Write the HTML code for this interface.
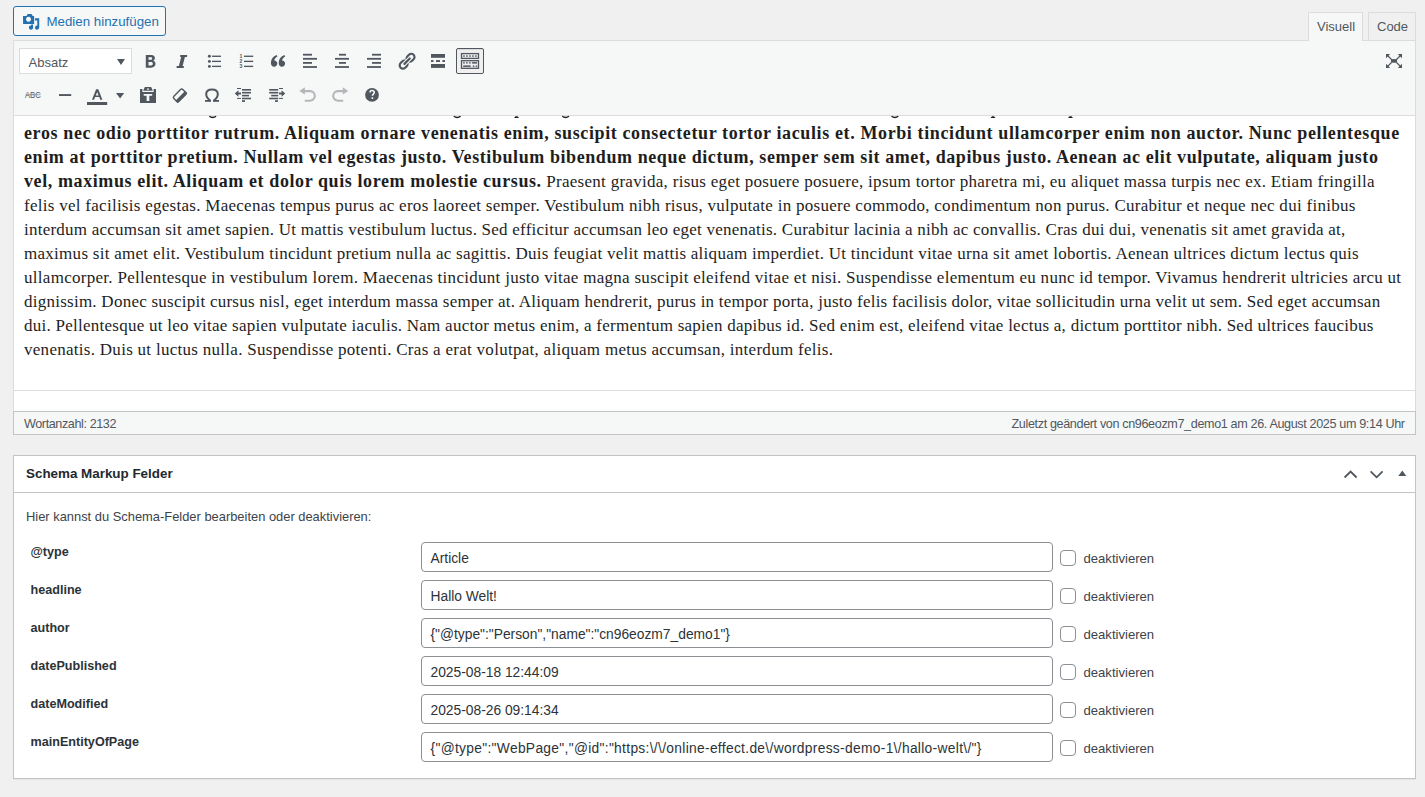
<!DOCTYPE html>
<html lang="de">
<head>
<meta charset="utf-8">
<title>Beitrag bearbeiten</title>
<style>
html,body{margin:0;padding:0;}
body{width:1425px;height:797px;background:#f0f0f1;position:relative;overflow:hidden;font-family:"Liberation Sans",sans-serif;color:#3c434a;}
.abs{position:absolute;}
.t{position:absolute;white-space:nowrap;line-height:1;}
/* media button */
#media{left:13px;top:6px;width:151px;height:28px;border:1px solid #2271b1;border-radius:3px;background:#f6f7f7;}
/* tabs */
.tab{position:absolute;top:12px;height:28px;border:1px solid #dcdcde;border-bottom:0;box-sizing:border-box;}
#tabv{left:1308px;width:55px;height:29px;background:#f6f7f7;z-index:3;}
#tabc{left:1368px;width:48px;background:#f0f0f1;}
/* editor */
#ed{left:13px;top:40px;width:1401px;height:393px;border:1px solid #dcdcde;background:#fff;}
#tb{left:14px;top:41px;width:1401px;height:74px;background:#f6f7f7;border-bottom:1px solid #dcdcde;}
#sel{left:19px;top:48px;width:111px;height:24px;border:1px solid #dcdcde;background:#fff;}
#ks{left:456px;top:48px;width:26px;height:24px;border:1px solid #50575e;border-radius:2px;background:#f0f0f1;box-shadow:inset 0 2px 1px -1px rgba(0,0,0,.1);}
#content{left:14px;top:116px;width:1401px;height:274px;overflow:hidden;background:#fff;}
#hr1{left:14px;top:390px;width:1401px;height:1px;background:#dcdcde;}
#status{left:13px;top:411px;width:1401px;height:22px;border:1px solid #c3c4c7;background:#f6f7f7;}
.ln{position:absolute;left:10px;height:24px;line-height:24px;white-space:nowrap;color:#1e1e1e;}
.ln .b{font-family:"Liberation Serif",serif;font-weight:bold;font-size:18px;}
.ln .r{font-family:"Liberation Serif",serif;font-size:17px;}
/* schema box */
#box{left:13px;top:455px;width:1401px;height:322px;border:1px solid #c3c4c7;background:#fff;box-shadow:0 1px 1px rgba(0,0,0,.04);}
#boxh{left:14px;top:492px;width:1401px;height:1px;background:#c3c4c7;}
.inp{position:absolute;left:421px;width:630px;height:28px;border:1px solid #8c8f94;border-radius:4px;background:#fff;}
.cb{position:absolute;left:1060px;width:14px;height:14px;border:1px solid #8c8f94;border-radius:4px;background:#fff;}
.lbl{font-weight:bold;color:#2c3338;}
</style>
</head>
<body>
<div id="media" class="abs"></div>
<div class="t" style="left:46.5px;top:15px;font-size:13.3px;color:#2271b1;">Medien hinzufügen</div>

<div id="tabc" class="tab"></div>
<div id="ed" class="abs"></div>
<div id="tb" class="abs"></div>
<div id="tabv" class="tab"></div>
<div class="t" style="left:1317px;top:20px;font-size:13px;color:#50575e;z-index:4">Visuell</div>
<div class="t" style="left:1377px;top:20px;font-size:13px;color:#50575e;">Code</div>

<div id="sel" class="abs"></div>
<div class="t" style="left:28.5px;top:56px;font-size:13px;color:#50575e;">Absatz</div>
<div id="ks" class="abs"></div>

<div id="content" class="abs">
<div class="ln" style="top:5px"><span class="b" style="letter-spacing:0.618px">eros nec odio porttitor rutrum. Aliquam ornare venenatis enim, suscipit consectetur tortor iaculis et. Morbi tincidunt ullamcorper enim non auctor. Nunc pellentesque</span></div>
<div class="ln" style="top:29px"><span class="b" style="letter-spacing:0.580px">enim at porttitor pretium. Nullam vel egestas justo. Vestibulum bibendum neque dictum, semper sem sit amet, dapibus justo. Aenean ac elit vulputate, aliquam justo</span></div>
<div class="ln" style="top:53px"><span class="b" style="letter-spacing:0.593px">vel, maximus elit. Aliquam et dolor quis lorem molestie cursus.</span><span class="r" style="letter-spacing:0.286px"> Praesent gravida, risus eget posuere posuere, ipsum tortor pharetra mi, eu aliquet massa turpis nec ex. Etiam fringilla</span></div>
<div class="ln" style="top:78px"><span class="r" style="letter-spacing:0.276px">felis vel facilisis egestas. Maecenas tempus purus ac eros laoreet semper. Vestibulum nibh risus, vulputate in posuere commodo, condimentum non purus. Curabitur et neque nec dui finibus</span></div>
<div class="ln" style="top:102px"><span class="r" style="letter-spacing:0.238px">interdum accumsan sit amet sapien. Ut mattis vestibulum luctus. Sed efficitur accumsan leo eget venenatis. Curabitur lacinia a nibh ac convallis. Cras dui dui, venenatis sit amet gravida at,</span></div>
<div class="ln" style="top:126px"><span class="r" style="letter-spacing:0.277px">maximus sit amet elit. Vestibulum tincidunt pretium nulla ac sagittis. Duis feugiat velit mattis aliquam imperdiet. Ut tincidunt vitae urna sit amet lobortis. Aenean ultrices dictum lectus quis</span></div>
<div class="ln" style="top:150px"><span class="r" style="letter-spacing:0.287px">ullamcorper. Pellentesque in vestibulum lorem. Maecenas tincidunt justo vitae magna suscipit eleifend vitae et nisi. Suspendisse elementum eu nunc id tempor. Vivamus hendrerit ultricies arcu ut</span></div>
<div class="ln" style="top:174px"><span class="r" style="letter-spacing:0.249px">dignissim. Donec suscipit cursus nisl, eget interdum massa semper at. Aliquam hendrerit, purus in tempor porta, justo felis facilisis dolor, vitae sollicitudin urna velit ut sem. Sed eget accumsan</span></div>
<div class="ln" style="top:198px"><span class="r" style="letter-spacing:0.255px">dui. Pellentesque ut leo vitae sapien vulputate iaculis. Nam auctor metus enim, a fermentum sapien dapibus id. Sed enim est, eleifend vitae lectus a, dictum porttitor nibh. Sed ultrices faucibus</span></div>
<div class="ln" style="top:222px"><span class="r" style="letter-spacing:0.283px">venenatis. Duis ut luctus nulla. Suspendisse potenti. Cras a erat volutpat, aliquam metus accumsan, interdum felis.</span></div>
</div>
<div id="hr1" class="abs"></div>
<div id="status" class="abs"></div>
<div class="t" style="left:24px;top:417.5px;font-size:12.6px;letter-spacing:-0.4px;color:#50575e;">Wortanzahl: 2132</div>
<div class="t" style="left:1011.5px;top:417.5px;font-size:12.6px;letter-spacing:-0.36px;color:#50575e;">Zuletzt geändert von cn96eozm7_demo1 am 26. August 2025 um 9:14 Uhr</div>

<div id="box" class="abs"></div>
<div id="boxh" class="abs"></div>
<div class="t" style="left:26px;top:467px;font-size:13.4px;font-weight:bold;color:#23282d;">Schema Markup Felder</div>
<div class="t" style="left:26px;top:510.5px;font-size:12.9px;color:#3c434a;">Hier kannst du Schema-Felder bearbeiten oder deaktivieren:</div>

<div class="t lbl" style="left:30.5px;top:546px;font-size:12.6px;">@type</div>
<div class="inp" style="top:542px"></div>
<div class="t" style="left:430.5px;top:552px;font-size:13.8px;letter-spacing:0;color:#2c3338;">Article</div>
<div class="cb" style="top:550px"></div>
<div class="t" style="left:1083.5px;top:552px;font-size:13.1px;color:#3c434a;">deaktivieren</div>
<div class="t lbl" style="left:30.5px;top:584px;font-size:12.6px;">headline</div>
<div class="inp" style="top:580px"></div>
<div class="t" style="left:430.5px;top:590px;font-size:13.8px;letter-spacing:0;color:#2c3338;">Hallo Welt!</div>
<div class="cb" style="top:588px"></div>
<div class="t" style="left:1083.5px;top:590px;font-size:13.1px;color:#3c434a;">deaktivieren</div>
<div class="t lbl" style="left:30.5px;top:622px;font-size:12.6px;">author</div>
<div class="inp" style="top:618px"></div>
<div class="t" style="left:430.5px;top:628px;font-size:13.8px;letter-spacing:0;color:#2c3338;">{&quot;@type&quot;:&quot;Person&quot;,&quot;name&quot;:&quot;cn96eozm7_demo1&quot;}</div>
<div class="cb" style="top:626px"></div>
<div class="t" style="left:1083.5px;top:628px;font-size:13.1px;color:#3c434a;">deaktivieren</div>
<div class="t lbl" style="left:30.5px;top:660px;font-size:12.6px;">datePublished</div>
<div class="inp" style="top:656px"></div>
<div class="t" style="left:430.5px;top:666px;font-size:13.8px;letter-spacing:0;color:#2c3338;">2025-08-18 12:44:09</div>
<div class="cb" style="top:664px"></div>
<div class="t" style="left:1083.5px;top:666px;font-size:13.1px;color:#3c434a;">deaktivieren</div>
<div class="t lbl" style="left:30.5px;top:698px;font-size:12.6px;">dateModified</div>
<div class="inp" style="top:694px"></div>
<div class="t" style="left:430.5px;top:704px;font-size:13.8px;letter-spacing:0;color:#2c3338;">2025-08-26 09:14:34</div>
<div class="cb" style="top:702px"></div>
<div class="t" style="left:1083.5px;top:704px;font-size:13.1px;color:#3c434a;">deaktivieren</div>
<div class="t lbl" style="left:30.5px;top:736px;font-size:12.6px;">mainEntityOfPage</div>
<div class="inp" style="top:732px"></div>
<div class="t" style="left:430.5px;top:742px;font-size:13.8px;letter-spacing:0.31px;color:#2c3338;">{&quot;@type&quot;:&quot;WebPage&quot;,&quot;@id&quot;:&quot;https:\/\/online-effect.de\/wordpress-demo-1\/hallo-welt\/&quot;}</div>
<div class="cb" style="top:740px"></div>
<div class="t" style="left:1083.5px;top:742px;font-size:13.1px;color:#3c434a;">deaktivieren</div>

<svg class="abs" style="left:0;top:0;z-index:10" width="1425" height="797" viewBox="0 0 1425 797">
<g fill="#50575e">
<!-- select arrow -->
<path d="M117 59h8l-4 6z"/>
<!-- B -->
<path fill-rule="evenodd" d="M145.8 55h5.4c2.3 0 3.7 1.2 3.7 3.1 0 1.2-.6 2.1-1.6 2.6 1.4.5 2.2 1.6 2.2 3.1 0 2.3-1.7 3.9-4.3 3.9h-5.4z M148.5 57.3v2.5h2.3c.9 0 1.4-.5 1.4-1.25s-.5-1.25-1.4-1.25z M148.5 62v3.4h2.6c1.1 0 1.7-.6 1.7-1.7s-.6-1.7-1.7-1.7z"/>
<!-- I -->
<path d="M180.2 55h6.9v1.9h-2.2l-2.3 9.1h1.2v1.9h-7.2v-1.9h2.3l2.3-9.1h-1z"/>
<!-- bullet list -->
<circle cx="209.4" cy="56.3" r="1.45"/><circle cx="209.4" cy="61.4" r="1.45"/><circle cx="209.4" cy="66.4" r="1.45"/>
<rect x="212" y="55.6" width="9" height="1.35"/><rect x="212" y="60.7" width="9" height="1.35"/><rect x="212" y="65.7" width="9" height="1.35"/>
<!-- numbered list -->
<text x="239.6" y="58.3" font-family="Liberation Sans" font-weight="bold" font-size="5.2">1</text>
<text x="239.6" y="63.4" font-family="Liberation Sans" font-weight="bold" font-size="5.2">2</text>
<text x="239.6" y="68.4" font-family="Liberation Sans" font-weight="bold" font-size="5.2">3</text>
<rect x="244" y="55.6" width="9.2" height="1.35"/><rect x="244" y="60.7" width="9.2" height="1.35"/><rect x="244" y="65.7" width="9.2" height="1.35"/>
<!-- quote -->
<path d="M276.6 55l.8 1.4c-1.7 1-2.9 2.4-3.1 4 1.7 0 3 1.3 3 3.1 0 1.8-1.4 3.3-3.1 3.3-2 0-3.3-1.6-3.3-3.9 0-3.6 2.2-6.5 5.7-7.9z"/>
<path d="M284.4 55l.8 1.4c-1.7 1-2.9 2.4-3.1 4 1.7 0 3 1.3 3 3.1 0 1.8-1.4 3.3-3.1 3.3-2 0-3.3-1.6-3.3-3.9 0-3.6 2.2-6.5 5.7-7.9z"/>
<!-- align left -->
<rect x="303" y="53.8" width="9" height="1.8"/><rect x="303" y="57.9" width="14" height="1.8"/><rect x="303" y="62" width="9" height="1.8"/><rect x="303" y="66.1" width="14" height="1.8"/>
<!-- align center -->
<rect x="339" y="53.8" width="7" height="1.8"/><rect x="335" y="57.9" width="14" height="1.8"/><rect x="339" y="62" width="7" height="1.8"/><rect x="335" y="66.1" width="14" height="1.8"/>
<!-- align right -->
<rect x="372" y="53.8" width="9" height="1.8"/><rect x="367" y="57.9" width="14" height="1.8"/><rect x="372" y="62" width="9" height="1.8"/><rect x="367" y="66.1" width="14" height="1.8"/>
<!-- link (dashicons-editor-link style) -->
<path transform="translate(396.6 51.2)" d="M17.74 2.76c1.68 1.69 1.68 4.41 0 6.1l-1.53 1.52c-1.12 1.12-2.7 1.47-4.14 1.09l2.62-2.61.76-.77.76-.76c.84-.84.84-2.2 0-3.04-.84-.85-2.2-.85-3.04 0l-.77.76-3.38 3.38c-.37-1.44-.02-3.02 1.1-4.14l1.52-1.53c1.690-1.68 4.42-1.68 6.1 0zM8.59 13.43l5.34-5.34c.42-.42.42-1.1 0-1.52-.44-.43-1.13-.39-1.53 0l-5.33 5.34c-.42.42-.42 1.1 0 1.52.44.43 1.13.39 1.52 0zm-.76 2.290l4.14-4.15c.38 1.44.03 3.02-1.09 4.14l-1.52 1.53c-1.69 1.68-4.41 1.68-6.1 0-1.680-1.68-1.68-4.42 0-6.1l1.53-1.52c1.12-1.12 2.7-1.47 4.14-1.1l-4.14 4.15c-.85.84-.85 2.2 0 3.05.84.84 2.2.84 3.04 0z"/>
<!-- more -->
<rect x="431" y="54" width="14" height="3.8"/><rect x="431" y="60.1" width="2.5" height="1.9"/><rect x="436" y="60.1" width="4" height="1.9"/><rect x="442.4" y="60.1" width="2.6" height="1.9"/><rect x="431" y="64" width="14" height="3.9"/>
<!-- kitchen sink -->
<g fill="none" stroke="#50575e" stroke-width="1.3">
<rect x="461.5" y="53.6" width="17" height="4.8"/>
<rect x="461.5" y="60.7" width="17" height="7.6"/>
</g>
<rect x="463.2" y="55.3" width="1.5" height="1.5"/><rect x="466.2" y="55.3" width="1.5" height="1.5"/><rect x="469.2" y="55.3" width="1.5" height="1.5"/><rect x="472.2" y="55.3" width="1.5" height="1.5"/><rect x="475.2" y="55.3" width="1.5" height="1.5"/>
<rect x="463.2" y="62.1" width="1.5" height="1.5"/><rect x="466.2" y="62.1" width="1.5" height="1.5"/><rect x="469.2" y="62.1" width="1.5" height="1.5"/><rect x="472.1" y="62.1" width="4.9" height="1.5"/>
<rect x="463.2" y="65.4" width="7.5" height="1.5"/><rect x="472.8" y="65.4" width="1.5" height="1.5"/><rect x="475.7" y="65.4" width="1.5" height="1.5"/>
<!-- fullscreen -->
<rect x="1391" y="59.1" width="6" height="3.6"/>
<path d="M1386 54h4.2l-4.2 4.2z"/><path d="M1402 54h-4.2l4.2 4.2z"/><path d="M1386 68h4.2l-4.2-4.2z"/><path d="M1402 68h-4.2l4.2-4.2z"/>
<path d="M1387.5 55.5l4 4M1400.5 55.5l-4 4M1387.5 66.5l4-4M1400.5 66.5l-4-4" stroke="#50575e" stroke-width="1.1" fill="none"/>
<!-- row 2 -->
<text x="25" y="97.9" font-family="Liberation Sans" font-size="8.3" textLength="15.8" lengthAdjust="spacingAndGlyphs" fill="#50575e">ABC</text>
<rect x="25.5" y="94.4" width="15" height="0.8" fill="#8c8f94"/>
<rect x="59" y="94.1" width="12.2" height="1.9"/>
<path fill-rule="evenodd" d="M96.1 89.3h2.2l4.1 10.4h-2.1l-1-2.6h-4.2l-1 2.6h-2.1z M97.2 92l-1.4 3.5h2.8z"/>
<rect x="87" y="102" width="20.2" height="3"/>
<path d="M116 93.1h8.2l-4.1 5.3z"/>
<!-- paste -->
<path fill-rule="evenodd" d="M140 89h2.4v3h11.2v-3h2.4v13.9h-16z M143.7 94v1.8h2.9v5.2h2.7v-5.2h2.9v-1.8z"/>
<path fill-rule="evenodd" d="M143.2 90.8l1.6-3.9h6.4l1.6 3.9z M148 88.2a.8.8 0 1 0 .01 0z"/>
<!-- eraser -->
<g transform="rotate(-45 179.7 95.4)">
<rect x="173.4" y="91.9" width="12.6" height="7" rx="1.6" fill="none" stroke="#50575e" stroke-width="1.4"/>
<rect x="172.7" y="96.2" width="14" height="3.4" rx="1.2"/>
</g>
<!-- omega -->
<path fill="none" stroke="#50575e" stroke-width="2" d="M210.3 100.6C207.4 98.8 206.2 96.4 206.2 94.1 206.2 90.9 208.6 89.4 212 89.4S217.8 90.9 217.8 94.1C217.8 96.4 216.6 98.8 213.7 100.6"/>
<rect x="205" y="100" width="6" height="1.8"/><rect x="213" y="100" width="6" height="1.8"/>
<!-- outdent -->
<rect x="242" y="89" width="9" height="1.6"/><rect x="242" y="91.9" width="9" height="1.6"/><rect x="242" y="94.8" width="7" height="1.6"/><rect x="242" y="97.7" width="9" height="1.6"/>
<rect x="237" y="88" width="4" height="1"/><rect x="237" y="97.9" width="4" height="1"/><rect x="242" y="100.2" width="3" height="1.7"/>
<path d="M234.8 93.5l3.6-3.2v2.1h2.6v2.2h-2.6v2.1z"/>
<!-- indent -->
<rect x="269.2" y="89" width="9" height="1.6"/><rect x="269.2" y="91.9" width="9" height="1.6"/><rect x="271.2" y="94.8" width="7" height="1.6"/><rect x="269.2" y="97.7" width="9" height="1.6"/>
<rect x="279" y="88" width="4" height="1"/><rect x="279" y="97.9" width="4" height="1"/><rect x="275" y="100.2" width="3" height="1.7"/>
<path d="M285.2 93.5l-3.6-3.2v2.1h-2.6v2.2h2.6v2.1z"/>
<!-- help -->
<circle cx="372" cy="94.9" r="6.9"/>
</g>
<path d="M370 92.6c0-1.3.9-2.1 2.1-2.1s2.1.8 2.1 2c0 1.5-1.8 1.6-1.8 3.2" fill="none" stroke="#f6f7f7" stroke-width="1.6"/>
<rect x="371.5" y="97.2" width="1.7" height="1.7" fill="#f6f7f7"/>
<!-- undo / redo -->
<g fill="none" stroke="#b4b7ba" stroke-width="2.1">
<path d="M304 91.1H310A4.8 4.8 0 0 1 310 100.7H304.8"/>
<path d="M343.5 91.1H338A4.8 4.8 0 0 0 338 100.7H343.2"/>
</g>
<g fill="#b4b7ba">
<path d="M299.4 91l5.4-3.8v7.2z"/>
<path d="M348.2 91l-5.4-3.8v7.2z"/>
</g>
<!-- media icon -->
<g fill="#2271b1">
<path fill-rule="evenodd" d="M23 16h3.6l.6-1.4c.2-.5.5-.7 1-.7h2.8c.5 0 .8.2 1 .7l.6 1.4h1.5v8h-11z M28.5 16.8a2.5 2.5 0 1 0 .01 0z"/>
<path d="M34.9 18.3h4.3v9.3a2.1 2.1 0 1 1-1.9-2.1v-5h-2.4z"/>
<path d="M33 24.5v2.6a2.1 2.1 0 1 1-1.8-1.6v-1z"/>
</g>
<!-- schema box icons -->
<g fill="none" stroke="#50575e" stroke-width="1.8">
<path d="M1344.6 477.5l6-6 6 6"/>
<path d="M1370.6 471.3l6 6 6-6"/>
</g>
<path d="M1398.3 476h8l-4-5.6z" fill="#50575e"/>
<!-- previous line descenders -->
<g fill="none" stroke="#1e1e1e" stroke-width="1.4">
<path d="M209.3 116.2q3.4 2.6 6.8 0"/>
<path d="M453.8 116.2q3.4 2.6 6.8 0"/>
<path d="M562.2 116.2q3.4 2.6 6.8 0"/>
<path d="M891.5 116.2q3.4 2.6 6.8 0"/>
</g>
<g fill="#1e1e1e">
<path d="M514 118h5l-1.5-1.8h-2z"/>
<path d="M990.5 118h5l-1.5-1.8h-2z"/>
<path d="M1068 118h5l-1.5-1.8h-2z"/>
</g>
</svg>

</body>
</html>
